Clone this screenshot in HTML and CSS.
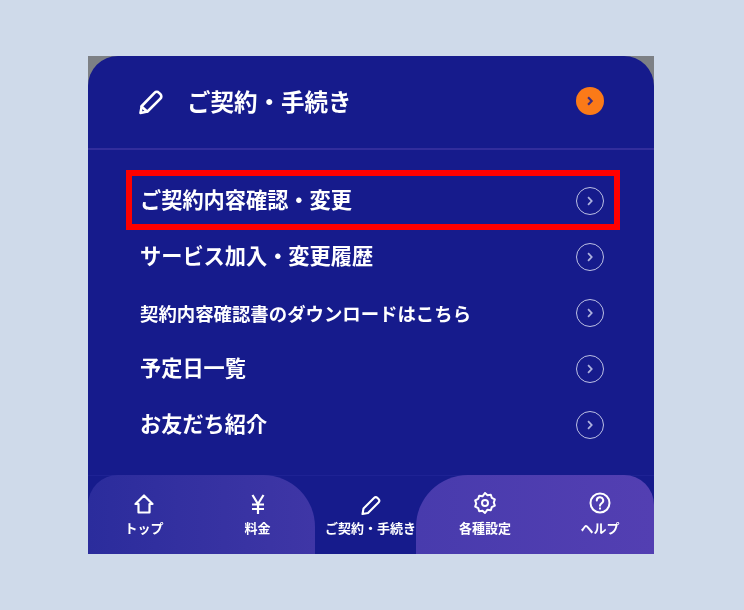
FILE: index.html
```html
<!DOCTYPE html>
<html lang="ja">
<head>
<meta charset="utf-8">
<title>ご契約・手続き</title>
<link rel="stylesheet" href="styles.css">
</head>
<body>
<main class="card-wrap">
  <div class="card">
    <header class="head">
      <svg class="head-icon" viewBox="0 0 26 26" fill="none" stroke="#fff" stroke-width="2.600" stroke-linejoin="round" stroke-linecap="round"><path d="M2.500 24 3.800 17 16.500 3.800a3.200 3.200 0 0 1 4.500 0l1.400 1.400a3.200 3.200 0 0 1 0 4.500L9.500 22.500z"/><path d="M3.500 17.500 9 22.500"/></svg>
      <h1 class="head-title">ご契約・手続き</h1>
      <span class="dot">
        <svg viewBox="0 0 10 10" class="chev-s" fill="none" stroke="#3b2a80" stroke-width="1.800"><path d="M3.400 1.800 6.400 5l-3 3.200"/></svg>
      </span>
    </header>
    <ul class="list">
      <li class="row row-marked"><span class="label">ご契約内容確認・変更</span><span class="ring"><svg viewBox="0 0 10 10" class="chev-s" fill="none" stroke="#aeb2de" stroke-width="1.500"><path d="M3.400 1.800 6.400 5l-3 3.200"/></svg></span></li>
      <li class="row"><span class="label">サービス加入・変更履歴</span><span class="ring"><svg viewBox="0 0 10 10" class="chev-s" fill="none" stroke="#aeb2de" stroke-width="1.500"><path d="M3.400 1.800 6.400 5l-3 3.200"/></svg></span></li>
      <li class="row"><span class="label label-small">契約内容確認書のダウンロードはこちら</span><span class="ring"><svg viewBox="0 0 10 10" class="chev-s" fill="none" stroke="#aeb2de" stroke-width="1.500"><path d="M3.400 1.800 6.400 5l-3 3.200"/></svg></span></li>
      <li class="row"><span class="label">予定日一覧</span><span class="ring"><svg viewBox="0 0 10 10" class="chev-s" fill="none" stroke="#aeb2de" stroke-width="1.500"><path d="M3.400 1.800 6.400 5l-3 3.200"/></svg></span></li>
      <li class="row"><span class="label">お友だち紹介</span><span class="ring"><svg viewBox="0 0 10 10" class="chev-s" fill="none" stroke="#aeb2de" stroke-width="1.500"><path d="M3.400 1.800 6.400 5l-3 3.200"/></svg></span></li>
    </ul>
    <nav class="nav">
      <div class="pill pill-left">
        <a class="tab tab-top">
          <svg class="tab-icon" viewBox="0 0 22 22" fill="none" stroke="#fff" stroke-width="2.200" stroke-linejoin="round"><path d="M11 2.500 2.500 11h3v8.500h11V11h3z"/></svg>
          <span>トップ</span>
        </a>
        <a class="tab tab-fee">
          <svg class="tab-icon" viewBox="0 0 22 22" fill="none" stroke="#fff" stroke-width="2.200"><path d="M5.500 2l5.500 9 5.500-9M11 11v10M5 11.500h12M5 16h12"/></svg>
          <span>料金</span>
        </a>
      </div>
      <a class="tab tab-now">
        <svg class="tab-icon" viewBox="0 0 22 22" fill="none" stroke="#fff" stroke-width="2.100" stroke-linejoin="round"><path d="M2.500 20l1-5.500L14 4a2.500 2.500 0 0 1 3.500 0l1 1a2.500 2.500 0 0 1 0 3.500L8 19z"/></svg>
        <span>ご契約・手続き</span>
      </a>
      <div class="pill pill-right">
        <a class="tab tab-set">
          <svg class="tab-icon" viewBox="0 0 22 22" fill="none" stroke="#fff" stroke-width="2" stroke-linejoin="round"><path d="M11 1l2.500 2.300 3.300-.6 1 3.200 3 1.500-1 3.100 1 3.100-3 1.500-1 3.200-3.300-.6L11 21l-2.500-2.300-3.300.6-1-3.200-3-1.500 1-3.100-1-3.100 3-1.500 1-3.200 3.300.6z"/><circle cx="11" cy="11" r="3"/></svg>
          <span>各種設定</span>
        </a>
        <a class="tab tab-help">
          <svg class="tab-icon" viewBox="0 0 22 22" fill="none" stroke="#fff" stroke-width="2"><circle cx="11" cy="11" r="9.500"/><path d="M7.800 8.500a3.200 3.200 0 1 1 4.700 2.800c-1 .6-1.500 1.100-1.500 2.400" stroke-linecap="round"/><path d="M11 15.500v2"/></svg>
          <span>ヘルプ</span>
        </a>
      </div>
    </nav>
  </div>
</main>
</body>
</html>
```
FILE: styles.css
```css
* { box-sizing: border-box; }
html, body { margin: 0; height: 100%; }
body {
  background: #cfdaea;
  font-family: "Noto Sans CJK JP", "Noto Sans", sans-serif;
  color: #fff;
}
.card-wrap {
  padding: 56px 90px 0 88px;
}
.card {
  width: 566px;
  height: 498px;
  background: linear-gradient(#7d8085, #7d8085) top / 100% 30px no-repeat, #161b8c;
  display: flex;
  flex-direction: column;
  position: relative;
}
.head {
  height: 94px;
  display: flex;
  align-items: center;
  padding: 0 50px 2px 50px;
  background: #161b8c;
  border-radius: 30px 30px 0 0;
  border-bottom: 2px solid #322d9c;
  flex: none;
}
.head-icon { width: 26px; height: 26px; flex: none; margin-top: 2px; filter: blur(.35px); }
.head-title {
  margin: 0 0 0 23px;
  font-size: 23.500px;
  font-weight: 700;
  line-height: 28px;
  flex: 1;
  filter: blur(.35px);
}
.dot, .ring {
  width: 28px;
  height: 28px;
  border-radius: 50%;
  display: flex;
  align-items: center;
  justify-content: center;
  flex: none;
}
.dot { background: #fb7a18; }
.ring { border: 1.500px solid #bcc0e4; }
.chev-s { width: 12px; height: 12px; }
.list {
  list-style: none;
  margin: 0;
  padding: 23px 50px 0 52px;
  flex: 1;
  background: #161b8c;
}
.row {
  height: 56px;
  display: flex;
  align-items: center;
  justify-content: space-between;
  position: relative;
}
.row-marked::after {
  content: "";
  position: absolute;
  left: -14px;
  right: -16px;
  top: -3px;
  bottom: -1px;
  border: 6px solid #ff0000;
}
.label {
  font-size: 21.200px;
  font-weight: 700;
  line-height: 28px;
  margin-bottom: 5px;
  filter: blur(.35px);
}
.label-small { font-size: 18.400px; margin-bottom: 0; }
.nav {
  height: 79px;
  flex: none;
  display: flex;
  background: #161b8c;
  border-top: 1px solid #1e2294;
}
.pill { display: flex; height: 79px; margin-top: -1px; }
.pill-left {
  width: 227px;
  background: linear-gradient(90deg, #2b2c9c, #3f36a6);
  border-radius: 30px 52px 0 0;
}
.pill-right {
  width: 238px;
  background: linear-gradient(90deg, #483bad, #533fb2);
  border-radius: 52px 30px 0 0;
}
.tab {
  display: flex;
  flex-direction: column;
  align-items: center;
  font-size: 13px;
  font-weight: 700;
  line-height: 16px;
  white-space: nowrap;
  filter: blur(.3px);
}
.tab-icon { width: 22px; height: 22px; display: block; margin-bottom: 5px; }
.tab-top { width: 112px; padding-top: 18px; }
.tab-fee { width: 115px; padding-top: 18px; }
.tab-now { width: 101px; padding-top: 18px; padding-left: 10px; }
.tab-now .tab-icon { margin-bottom: 4px; }
.tab-set { width: 138px; padding-top: 17px; }
.tab-set .tab-icon { margin-bottom: 6px; }
.tab-help { width: 92px; padding-top: 17px; }
.tab-help .tab-icon { margin-bottom: 6px; }
```
